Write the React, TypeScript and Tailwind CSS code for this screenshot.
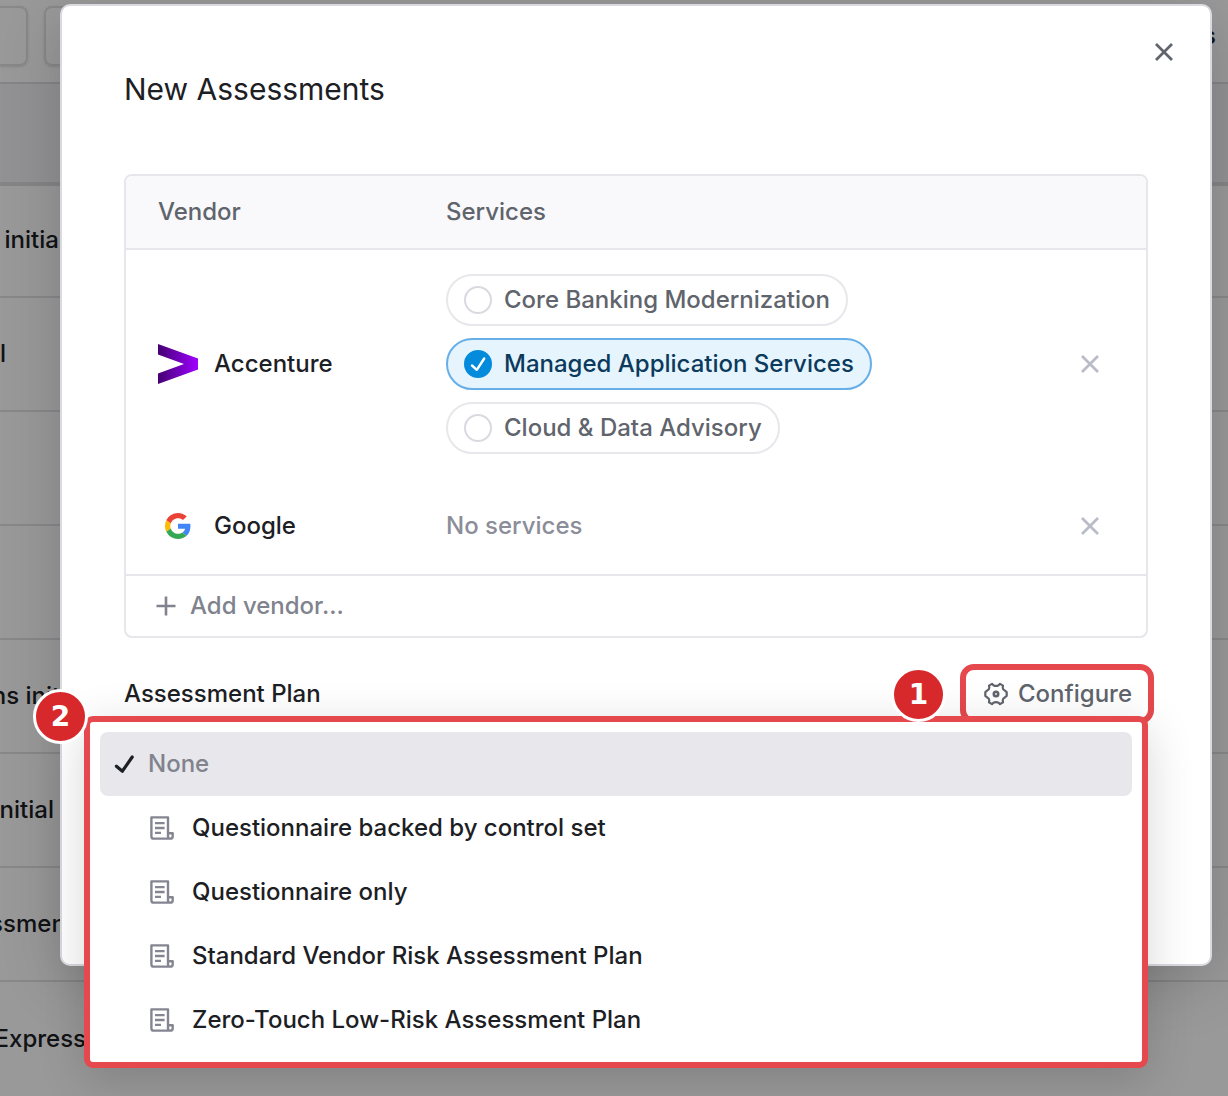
import { useState } from "react";

const backgroundRows = [
  { text: "Questions initial", width: "w-[65px]" },
  { text: "Initial", width: "w-[6px]" },
  { text: "", width: "w-[60px]" },
  { text: "", width: "w-[60px]" },
  { text: "Questions initial", width: "w-[86px]" },
  { text: "Vendor initial", width: "w-[54px]" },
  { text: "Assessment", width: "w-[74px]" },
  { text: "Express", width: "w-[86px]" },
];

const initialServices = [
  { name: "Core Banking Modernization", checked: false },
  { name: "Managed Application Services", checked: true },
  { name: "Cloud & Data Advisory", checked: false },
];

const plans = [
  "Questionnaire backed by control set",
  "Questionnaire only",
  "Standard Vendor Risk Assessment Plan",
  "Zero-Touch Low-Risk Assessment Plan",
];

function CloseIcon() {
  return (
    <svg viewBox="0 0 20 20" className="size-5" fill="none" stroke="currentColor" strokeWidth="2.7" aria-hidden="true">
      <path d="M2 2L18 18M18 2L2 18" />
    </svg>
  );
}

function AccentureLogo() {
  return (
    <svg viewBox="0 0 40 40" className="size-10 shrink-0" aria-hidden="true">
      <defs>
        <linearGradient id="accenture" x1="0" y1="0" x2="1" y2="0">
          <stop offset="0" stopColor="#450073" />
          <stop offset="0.55" stopColor="#7500c0" />
          <stop offset="1" stopColor="#a100ff" />
        </linearGradient>
      </defs>
      <path d="M0 0L40 14.5V25.5L0 40V29.5L26 20L0 10.5Z" fill="url(#accenture)" />
    </svg>
  );
}

function GoogleLogo() {
  return (
    <span className="flex size-10 shrink-0 items-center justify-center">
      <svg viewBox="0 0 48 48" className="size-[26px]" aria-hidden="true">
        <path fill="#EA4335" d="M24 9.5c3.54 0 6.71 1.22 9.21 3.6l6.85-6.85C35.9 2.38 30.47 0 24 0 14.62 0 6.51 5.38 2.56 13.22l7.98 6.19C12.43 13.72 17.74 9.5 24 9.5z" />
        <path fill="#4285F4" d="M46.98 24.55c0-1.57-.15-3.09-.38-4.55H24v9.02h12.94c-.58 2.96-2.26 5.48-4.78 7.18l7.73 6c4.51-4.18 7.09-10.36 7.09-17.65z" />
        <path fill="#FBBC05" d="M10.53 28.59c-.48-1.45-.76-2.99-.76-4.59s.27-3.14.76-4.59l-7.98-6.19C.92 16.46 0 20.12 0 24c0 3.88.92 7.54 2.56 10.78l7.97-6.19z" />
        <path fill="#34A853" d="M24 48c6.48 0 11.93-2.13 15.89-5.81l-7.73-6c-2.15 1.45-4.92 2.3-8.16 2.3-6.26 0-11.57-4.22-13.47-9.91l-7.98 6.19C6.51 42.62 14.62 48 24 48z" />
      </svg>
    </span>
  );
}

function GearIcon() {
  return (
    <svg viewBox="0 0 24 24" className="size-6" fill="none" stroke="currentColor" strokeWidth="2.2" strokeLinejoin="round" aria-hidden="true">
      <path d="M9.4 3.2L8 1.9L5 3.6L5.3 5.8Q5.2 7.8 3.2 8.6L1.3 10.2V13.8L3.2 15.4Q5.2 16.2 5.3 18.2L5 20.4L8 22.1L9.4 20.8Q12 19.4 14.6 20.8L16 22.1L19 20.4L18.7 18.2Q18.8 16.2 20.8 15.4L22.7 13.8V10.2L20.8 8.6Q18.8 7.8 18.7 5.8L19 3.6L16 1.9L14.6 3.2Q12 4.6 9.4 3.2Z" />
      <circle cx="12" cy="12" r="2.2" strokeWidth="2.6" />
    </svg>
  );
}

function PlanIcon() {
  return (
    <svg viewBox="0 0 24 24" className="size-6 shrink-0 text-[#858591]" fill="none" stroke="currentColor" strokeWidth="2.4" aria-hidden="true">
      <path d="M20.5 22.6H3.4Q1.4 22.6 1.4 20.6V1.4H18V20.4Q18 22.6 20.3 22.6Q22.7 22.6 22.7 20.4V17.2H18" strokeLinejoin="round" />
      <path d="M5 7.2H14.6M5 12H14.6M5 16.8H11" strokeWidth="2.3" />
    </svg>
  );
}

function Badge({ label, place }: { label: string; place: string }) {
  return (
    <span
      className={`absolute z-20 flex size-[55px] items-center justify-center rounded-full border-3 border-white bg-[#d7292b] font-['DejaVu_Sans',sans-serif] text-[28px] leading-none font-bold text-white ${place}`}
    >
      {label}
    </span>
  );
}

function BackgroundPage() {
  return (
    <div aria-hidden="true" className="absolute inset-0 overflow-hidden bg-white">
      <div className="flex h-[82px] items-start justify-between pt-1.5">
        <div className="flex gap-4">
          <div className="h-[60px] w-7 rounded-r-lg border-2 border-l-0 border-[#e3e3e7] shadow-sm" />
          <div className="h-[60px] w-40 rounded-lg border-2 border-[#e3e3e7] shadow-sm" />
        </div>
        <span className="pt-3.5 pr-3">Actions</span>
      </div>
      <div className="h-[104px] border-t-2 border-b-4 border-[#dedee3] bg-[#f3f3f8]" />
      {backgroundRows.map((row, i) => (
        <div key={i} className="-mt-0.5 mb-0.5 flex h-[114px] items-center border-b-2 border-[#e3e3e7] last-of-type:border-b-0">
          <span className={`flex justify-end whitespace-nowrap ${row.width}`}>{row.text}</span>
        </div>
      ))}
      <span className="absolute inset-0 bg-black/40" />
    </div>
  );
}

export default function App() {
  const [services, setServices] = useState(initialServices);
  const [selected, setSelected] = useState("None");

  const toggle = (name: string) =>
    setServices(services.map((s) => (s.name === name ? { ...s, checked: !s.checked } : s)));

  return (
    <div className="relative min-h-screen overflow-hidden pt-1 pr-4 pb-[130px] pl-[60px] font-[Inter,sans-serif] text-2xl leading-8 font-medium text-[#1c2024] [font-optical-sizing:none]">
      <BackgroundPage />

      <section
        role="dialog"
        aria-labelledby="dialog-title"
        className="relative flex min-h-[962px] flex-col rounded-[10px] border-2 border-[#d9d9e0] bg-white px-[62px] shadow-[0_16px_60px_rgba(0,0,0,0.18)]"
      >
        <button type="button" aria-label="Close" className="absolute top-9 right-9 text-[#60646c]">
          <CloseIcon />
        </button>

        <h1 id="dialog-title" className="pt-[63px] pb-[65px] text-[30px] leading-10 font-normal">
          New Assessments
        </h1>

        <div className="rounded-lg border-2 border-[#e6e6eb]">
          <table className="w-full table-fixed text-left">
            <thead>
              <tr className="h-[73px] border-b-2 border-[#e6e6eb] bg-[#f9f9fb] text-[#60646c]">
                <th scope="col" className="w-[320px] rounded-tl-md pl-8 font-medium">Vendor</th>
                <th scope="col" className="font-medium">Services</th>
                <th scope="col" className="w-28 rounded-tr-md"><span className="sr-only">Remove</span></th>
              </tr>
            </thead>
            <tbody>
              <tr>
                <td className="pl-8">
                  <div className="flex items-center gap-4">
                    <AccentureLogo />
                    Accenture
                  </div>
                </td>
                <td className="py-6">
                  <div className="flex flex-col items-start gap-3">
                    {services.map((s) => (
                      <label
                        key={s.name}
                        className={`flex h-[52px] items-center gap-3 rounded-full border-2 px-4 whitespace-nowrap ${
                          s.checked ? "border-[#66afe8] bg-[#e6f4fe] text-[#0b3a5c]" : "border-[#e8e8ec] text-[#60646c]"
                        }`}
                      >
                        <span className="relative flex">
                          <input
                            type="checkbox"
                            checked={s.checked}
                            onChange={() => toggle(s.name)}
                            className="size-7 appearance-none rounded-full border-2 border-[#d9d9e0] checked:border-[#058bdb] checked:bg-[#058bdb]"
                          />
                          {s.checked && (
                            <svg viewBox="0 0 28 28" className="pointer-events-none absolute inset-0 size-7" fill="none" stroke="white" strokeWidth="2.4" strokeLinecap="round" strokeLinejoin="round" aria-hidden="true">
                              <path d="M8 15.5L12.8 19.8L20.2 8.5" />
                            </svg>
                          )}
                        </span>
                        {s.name}
                      </label>
                    ))}
                  </div>
                </td>
                <td className="pl-[46px]">
                  <button type="button" aria-label="Remove Accenture" className="flex text-[#b9bbc6]">
                    <CloseIcon />
                  </button>
                </td>
              </tr>
              <tr className="h-24">
                <td className="pl-8">
                  <div className="flex items-center gap-4">
                    <GoogleLogo />
                    Google
                  </div>
                </td>
                <td className="text-[#8b8d98]">No services</td>
                <td className="pl-[46px]">
                  <button type="button" aria-label="Remove Google" className="flex text-[#b9bbc6]">
                    <CloseIcon />
                  </button>
                </td>
              </tr>
            </tbody>
          </table>
          <button type="button" className="flex h-[62px] w-full items-center gap-3.5 border-t-2 border-[#e6e6eb] pl-[30px] text-[#80838d]">
            <svg viewBox="0 0 20 20" className="size-5" fill="none" stroke="currentColor" strokeWidth="2.6" aria-hidden="true">
              <path d="M10 0.5V19.5M0.5 10H19.5" />
            </svg>
            Add vendor...
          </button>
        </div>

        <div className="relative pt-[26px]">
          <div className="flex items-center justify-between">
            <span id="plan-label">Assessment Plan</span>
            <div className="relative -mr-1.5">
              <Badge label="1" place="top-[3px] right-[208px]" />
              <button
                type="button"
                className="flex h-[60px] items-center gap-2.5 rounded-[14px] border-6 border-[#e5484d] px-4 pl-[18px] text-[#60646c]"
              >
                <GearIcon />
                Configure
              </button>
            </div>
          </div>

          <div className="absolute top-[78px] right-0 -left-10 z-10">
            <Badge label="2" place="-top-[27px] -left-[51px]" />
            <ul
              role="listbox"
              aria-labelledby="plan-label"
              className="rounded-[9px] border-6 border-[#e5484d] bg-white p-2.5 shadow-[0_12px_48px_rgba(0,0,0,0.16)]"
            >
              <li role="option" aria-selected={selected === "None"}>
                <button
                  type="button"
                  onClick={() => setSelected("None")}
                  className="flex h-16 w-full items-center gap-3 rounded-lg bg-[#e7e7ec] pl-3 text-[#80838d]"
                >
                  <svg viewBox="0 0 24 24" className="size-6 text-[#1c2024]" fill="none" stroke="currentColor" strokeWidth="3.2" strokeLinecap="round" strokeLinejoin="round" aria-hidden="true">
                    <path d="M4.4 14.2L10.4 19.2L20.2 5" />
                  </svg>
                  None
                </button>
              </li>
              {plans.map((plan) => (
                <li key={plan} role="option" aria-selected={selected === plan}>
                  <button type="button" onClick={() => setSelected(plan)} className="flex h-16 w-full items-center gap-[18px] rounded-lg pl-[50px]">
                    <PlanIcon />
                    {plan}
                  </button>
                </li>
              ))}
            </ul>
          </div>
        </div>
      </section>
    </div>
  );
}
